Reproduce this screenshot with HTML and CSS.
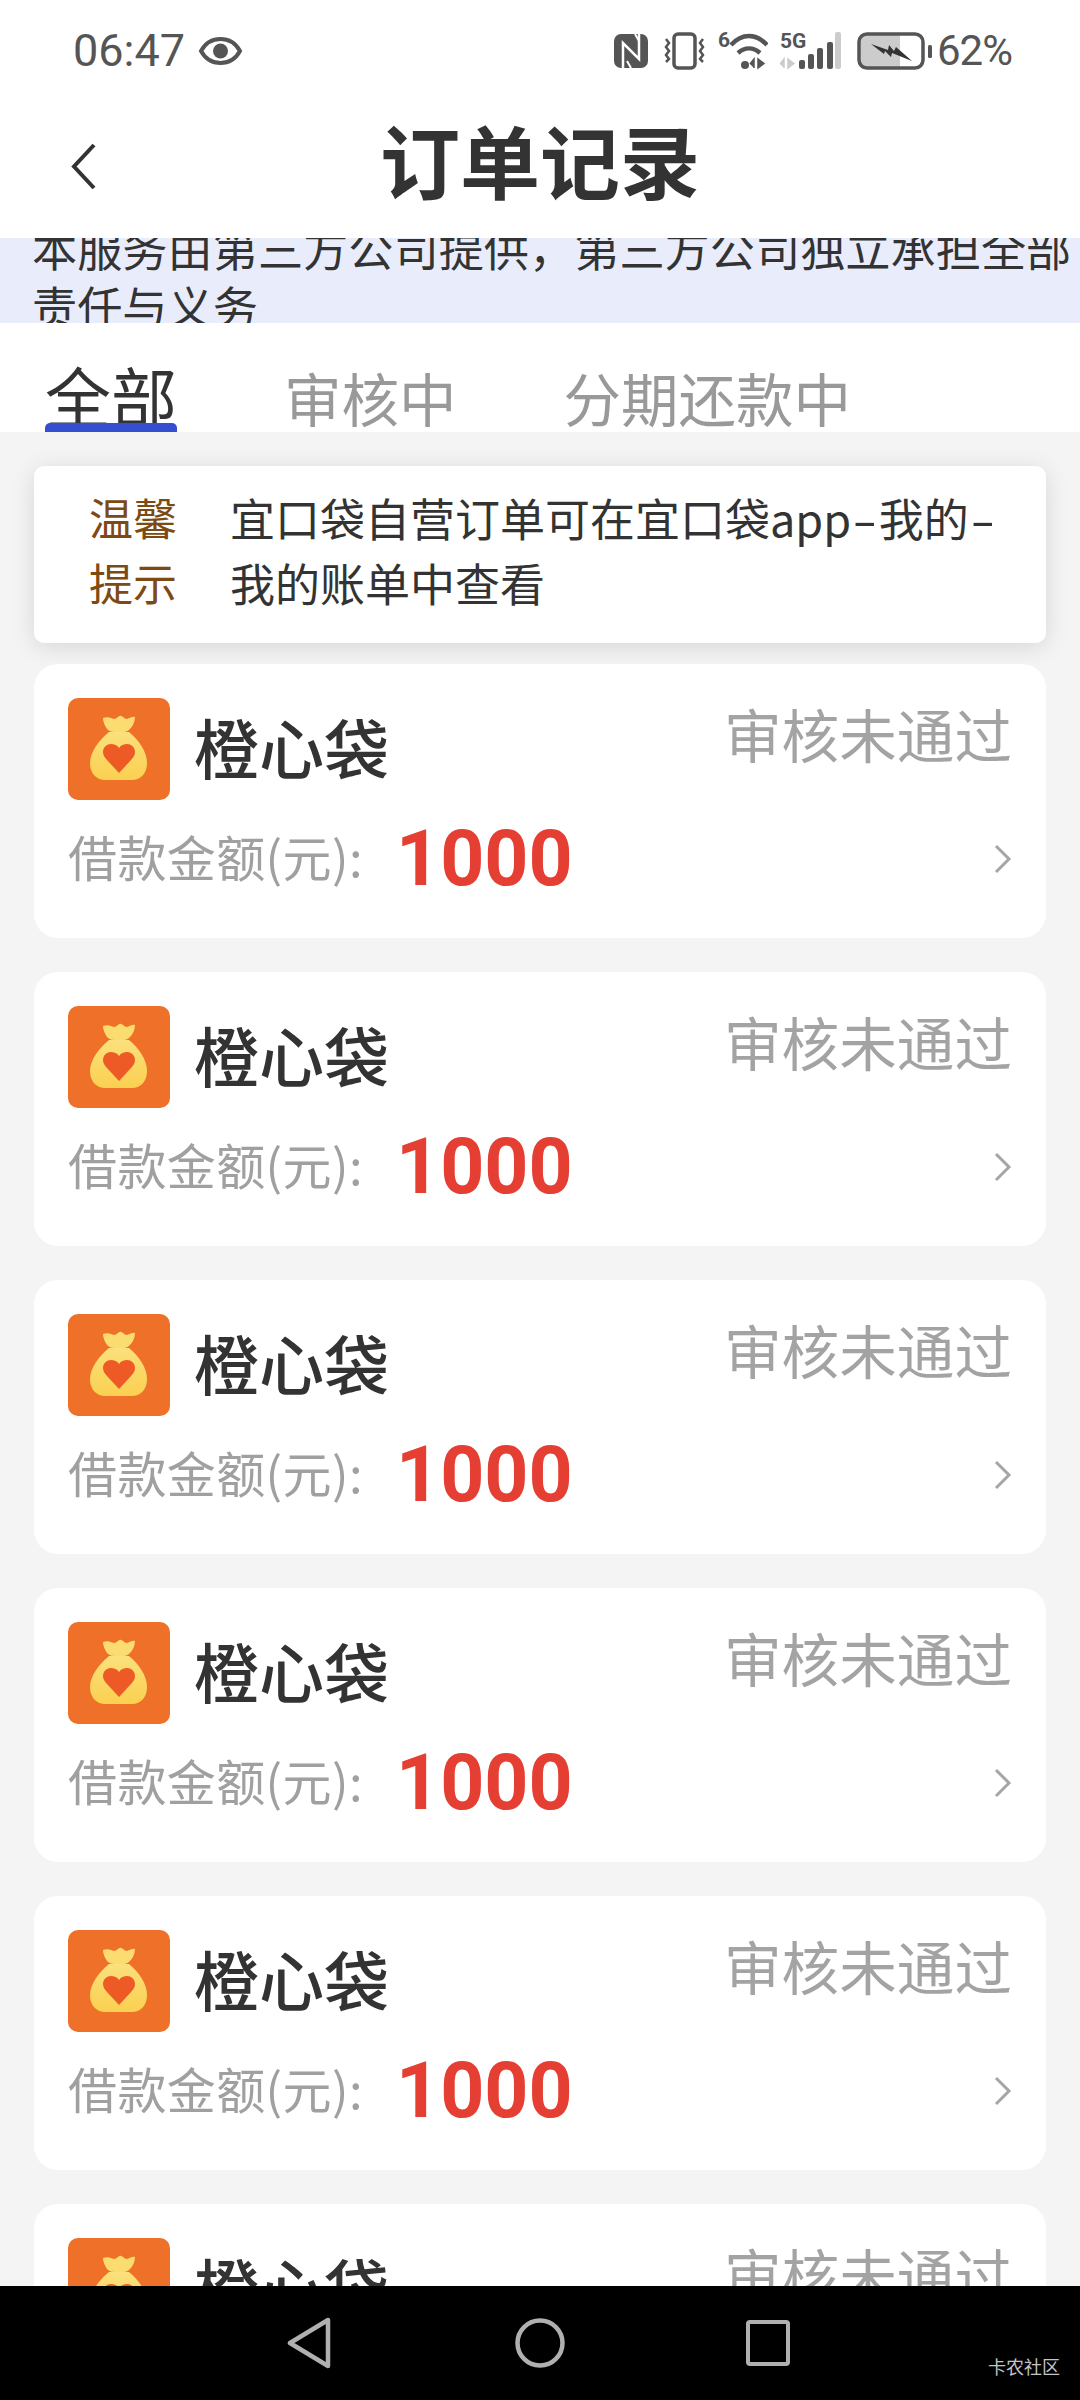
FILE: index.html
```html
<!DOCTYPE html>
<html lang="zh-CN">
<head>
    <meta charset="UTF-8">
    <meta name="viewport" content="width=device-width, initial-scale=1.0">
    <title>订单记录</title>
    <link rel="stylesheet" href="styles.css">
</head>
<body>
    <svg class="defs" width="0" height="0">
        <defs>
            <linearGradient id="bagFill" x1="0" y1="0" x2="0" y2="1">
                <stop offset="0" stop-color="#fbe07c"/>
                <stop offset="1" stop-color="#fad050"/>
            </linearGradient>
        </defs>
        <symbol id="bag" viewBox="0 0 102 102">
            <rect width="102" height="102" rx="10" fill="#ef7029"/>
            <path d="M35 20c5-2 8 0 11 1 3 0 5-4 7-3 2 0 3 3 6 3 3-1 6-3 8-2 0 4-2 9-5 12-2 2-4 3-6 3H46c-3 0-5-1-7-3-2-3-4-7-4-11z" fill="#fbdc70"/>
            <path d="M41 34h20c10 8 18 20 18 31 0 11-7 17-15 17H37c-8 0-15-6-15-17 0-11 9-23 19-31z" fill="url(#bagFill)"/>
            <path d="M51 75 39 62c-3-3-4-6-4-8 0-5 4-8 8-8 3 0 6 1 8 4 2-3 5-4 8-4 4 0 8 3 8 8 0 2-1 5-4 8z" fill="#ee5a26"/>
        </symbol>
        <symbol id="more" viewBox="0 0 18 30">
            <path d="M2 2l13 13L2 28" fill="none" stroke="#a6a6a6" stroke-width="3"/>
        </symbol>
    </svg>

    <div class="status-bar">
        <div class="status-left">
            <span class="clock">06:47</span>
            <svg class="eye" width="45" height="30" viewBox="0 0 45 30">
                <path d="M3 15C8 6 15 3 22.500 3S37 6 42 15c-5 9-12 12-19.500 12S8 24 3 15z" fill="none" stroke="#555" stroke-width="4"/>
                <circle cx="22.500" cy="15" r="7.500" fill="#555"/>
            </svg>
        </div>
        <div class="status-right">
            <svg width="34" height="34" viewBox="0 0 34 34">
                <rect width="34" height="34" rx="7" fill="#555"/>
                <path d="M9 34V9l16 16V0" fill="none" stroke="#fff" stroke-width="2.500"/>
                <path d="M13 27l4 7M21 0l4 7" fill="none" stroke="#fff" stroke-width="2"/>
            </svg>
            <svg class="gap-vibrate" width="43" height="38" viewBox="0 0 43 38">
                <rect x="11" y="2" width="21" height="34" rx="4" fill="none" stroke="#555" stroke-width="3.500"/>
                <path d="M3 7l3 4-3 4 3 4-3 4 3 4-3 3M40 7l-3 4 3 4-3 4 3 4-3 4 3 3" fill="none" stroke="#555" stroke-width="2.500"/>
            </svg>
            <svg class="gap-wifi" width="50" height="50" viewBox="0 -6 50 50">
                <text x="0" y="15" class="mini">6</text>
                <path d="M13 13C24 1 38 1 49 13" fill="none" stroke="#555" stroke-width="4.500"/>
                <path d="M20 21c7-6 15-6 22 0" fill="none" stroke="#555" stroke-width="4.500"/>
                <circle cx="27" cy="33" r="4" fill="#555"/>
                <path d="M36 36V27l-4 5M40 27v9l6-4.500z" fill="#555" stroke="#555" stroke-width="1.500"/>
            </svg>
            <svg class="gap-signal" width="61" height="50" viewBox="0 -6 61 50">
                <text x="0" y="16" class="mini">5G</text>
                <path d="M4 36v-9l-4 5M8 27v9l6-4.500z" fill="#ccc" stroke="#ccc" stroke-width="1.500"/>
                <rect x="19" y="28" width="6" height="9" rx="2" fill="#555"/>
                <rect x="28" y="22" width="6" height="15" rx="2" fill="#555"/>
                <rect x="37" y="16" width="6" height="21" rx="2" fill="#555"/>
                <rect x="47" y="10" width="6" height="27" rx="2" fill="#555"/>
                <rect x="55" y="0" width="6" height="37" rx="2" fill="#ccc"/>
            </svg>
            <svg class="gap-battery" width="75" height="38" viewBox="0 0 75 38">
                <path d="M7 2h36v34H7a5 5 0 0 1-5-5V7a5 5 0 0 1 5-5z" fill="#ccc"/>
                <rect x="2" y="2" width="64" height="34" rx="8" fill="none" stroke="#555" stroke-width="3.500"/>
                <path d="M14 12l17 6 1-5 5 6 2-4 16 14-20-8-1 4-6-6-1 3z" fill="#333"/>
                <rect x="71" y="13" width="4" height="13" rx="1.500" fill="#555"/>
            </svg>
            <span class="battery">62%</span>
        </div>
    </div>

    <div class="nav">
        <svg class="nav-back" width="26" height="47" viewBox="0 0 26 47">
            <path d="M24 2L4 23.500 24 45" fill="none" stroke="#333" stroke-width="4"/>
        </svg>
        <h1>订单记录</h1>
    </div>

    <div class="notice">
        <p>本服务由第三方公司提供，第三方公司独立承担全部责任与义务</p>
    </div>

    <div class="tabs">
        <div class="tab active">全部</div>
        <div class="tab">审核中</div>
        <div class="tab">分期还款中</div>
    </div>

    <div class="content">
        <div class="tip">
            <div class="tip-label">温馨提示</div>
            <div class="tip-text">宜口袋自营订单可在宜口袋app<span class="dash">-</span>我的<span class="dash">-</span>我的账单中查看</div>
        </div>

        <div class="card">
            <div class="card-top">
                <svg class="logo"><use href="#bag"/></svg>
                <div class="name">橙心袋</div>
                <div class="state">审核未通过</div>
            </div>
            <div class="card-bottom">
                <span class="label">借款金额(元):</span>
                <span class="amount">1000</span>
                <svg class="more"><use href="#more"/></svg>
            </div>
        </div>
        <div class="card">
            <div class="card-top">
                <svg class="logo"><use href="#bag"/></svg>
                <div class="name">橙心袋</div>
                <div class="state">审核未通过</div>
            </div>
            <div class="card-bottom">
                <span class="label">借款金额(元):</span>
                <span class="amount">1000</span>
                <svg class="more"><use href="#more"/></svg>
            </div>
        </div>
        <div class="card">
            <div class="card-top">
                <svg class="logo"><use href="#bag"/></svg>
                <div class="name">橙心袋</div>
                <div class="state">审核未通过</div>
            </div>
            <div class="card-bottom">
                <span class="label">借款金额(元):</span>
                <span class="amount">1000</span>
                <svg class="more"><use href="#more"/></svg>
            </div>
        </div>
        <div class="card">
            <div class="card-top">
                <svg class="logo"><use href="#bag"/></svg>
                <div class="name">橙心袋</div>
                <div class="state">审核未通过</div>
            </div>
            <div class="card-bottom">
                <span class="label">借款金额(元):</span>
                <span class="amount">1000</span>
                <svg class="more"><use href="#more"/></svg>
            </div>
        </div>
        <div class="card">
            <div class="card-top">
                <svg class="logo"><use href="#bag"/></svg>
                <div class="name">橙心袋</div>
                <div class="state">审核未通过</div>
            </div>
            <div class="card-bottom">
                <span class="label">借款金额(元):</span>
                <span class="amount">1000</span>
                <svg class="more"><use href="#more"/></svg>
            </div>
        </div>
        <div class="card">
            <div class="card-top">
                <svg class="logo"><use href="#bag"/></svg>
                <div class="name">橙心袋</div>
                <div class="state">审核未通过</div>
            </div>
        </div>
    </div>

    <div class="system-bar">
        <svg width="46" height="52" viewBox="0 0 46 52">
            <path d="M42 3v46L4 26z" fill="none" stroke="#b0b0b0" stroke-width="4.500" stroke-linejoin="round"/>
        </svg>
        <svg width="50" height="50" viewBox="0 0 50 50">
            <circle cx="25" cy="25" r="22.500" fill="none" stroke="#b0b0b0" stroke-width="4.500"/>
        </svg>
        <svg class="recent" width="44" height="46" viewBox="0 0 44 46">
            <rect x="2" y="2" width="40" height="42" rx="2" fill="none" stroke="#b0b0b0" stroke-width="4"/>
        </svg>
        <span class="watermark">卡农社区</span>
    </div>
</body>
</html>
```

FILE: styles.css
```css
html, body {
    margin: 0;
    padding: 0;
}

body {
    position: relative;
    width: 1080px;
    height: 2400px;
    overflow: hidden;
    display: flex;
    flex-direction: column;
    background-color: #f4f4f4;
    font-family: Roboto, 'Noto Sans CJK SC', sans-serif;
    color: #333;
}

.defs {
    position: absolute;
}

.status-bar {
    height: 102px;
    flex-shrink: 0;
    box-sizing: border-box;
    padding: 30px 68px 0 73px;
    display: flex;
    justify-content: space-between;
    align-items: flex-start;
    background-color: #fff;
    color: #555;
}

.status-left, .status-right {
    display: flex;
    align-items: center;
    height: 42px;
}

.clock {
    font-size: 45px;
    line-height: 42px;
}

.battery {
    margin-left: 5px;
    font-size: 42px;
    line-height: 42px;
    letter-spacing: -1px;
}

.eye {
    margin-left: 13px;
}

.gap-vibrate {
    margin-left: 15px;
}

.gap-wifi {
    margin-left: 12px;
}

.gap-signal {
    margin-left: 12px;
}

.gap-battery {
    margin-left: 16px;
}

.mini {
    font-family: Roboto, sans-serif;
    font-size: 21px;
    font-weight: 700;
    fill: #555;
}

.nav {
    position: relative;
    height: 136px;
    flex-shrink: 0;
    display: flex;
    justify-content: center;
    align-items: center;
    background-color: #fff;
}

.nav-back {
    position: absolute;
    left: 70px;
    top: 41px;
}

h1 {
    margin: 0 0 8px;
    font-size: 80px;
    line-height: 100px;
    font-weight: 700;
    color: #333;
}

.notice {
    height: 85px;
    flex-shrink: 0;
    box-sizing: border-box;
    padding: 0 5px 0 32px;
    display: flex;
    flex-direction: column;
    justify-content: center;
    overflow: hidden;
    background-color: #e9edfb;
}

.notice p {
    margin: 0;
    font-size: 45.200px;
    line-height: 58px;
}

.tabs {
    height: 109px;
    flex-shrink: 0;
    box-sizing: border-box;
    padding-left: 45px;
    display: flex;
    gap: 107px;
    background-color: #fff;
}

.tab {
    padding-top: 51px;
    font-size: 57.500px;
    line-height: 58px;
    color: #999;
}

.tab.active {
    position: relative;
    padding-top: 48px;
    font-size: 66px;
    line-height: 60px;
    color: #333;
}

.tab.active::after {
    content: '';
    position: absolute;
    left: 0;
    right: 0;
    bottom: 0;
    height: 9px;
    border-radius: 5px 5px 0 0;
    background-color: #3450d0;
}

.content {
    flex: 1;
    padding: 34px 34px 0;
    overflow: hidden;
}

.tip {
    height: 177px;
    box-sizing: border-box;
    margin-bottom: 21px;
    padding: 23px 30px 0 55px;
    display: flex;
    gap: 53px;
    border-radius: 10px;
    background-color: #fff;
    box-shadow: 0 4px 24px rgba(0, 0, 0, 0.12);
}

.tip-label {
    width: 88px;
    flex-shrink: 0;
    font-size: 44px;
    line-height: 65px;
    color: #7d4a14;
}

.tip-text {
    margin-top: -4px;
    font-family: 'Noto Sans CJK SC', sans-serif;
    font-size: 45px;
    line-height: 65px;
}

.dash {
    display: inline-block;
    margin: 0 6px;
    transform: scaleX(1.6);
}

.card {
    height: 274px;
    box-sizing: border-box;
    margin-bottom: 34px;
    padding: 34px 34px 0;
    border-radius: 24px;
    background-color: #fff;
}

.card-top {
    display: flex;
    align-items: flex-start;
}

.logo {
    width: 102px;
    height: 102px;
    flex-shrink: 0;
}

.name {
    margin: 10px 0 0 24px;
    font-size: 65px;
    line-height: 88px;
    font-weight: 500;
    color: #333;
}

.state {
    margin: 4px 0 0 auto;
    font-size: 57.600px;
    line-height: 74px;
    color: #a3a3a3;
}

.card-bottom {
    margin-top: 19px;
    height: 76px;
    display: flex;
    align-items: center;
}

.label {
    width: 328px;
    margin-bottom: 3px;
    font-family: 'Noto Sans CJK SC', sans-serif;
    font-size: 49px;
    letter-spacing: 0.400px;
    color: #a0a0a0;
    white-space: nowrap;
}

.amount {
    margin-top: 4px;
    font-size: 77px;
    font-weight: 700;
    color: #e53e33;
}

.more {
    width: 18px;
    height: 30px;
    margin: 4px 0 0 auto;
}

.system-bar {
    position: absolute;
    left: 0;
    right: 0;
    bottom: 0;
    height: 114px;
    box-sizing: border-box;
    padding-right: 4px;
    display: flex;
    justify-content: center;
    align-items: center;
    gap: 183px;
    background-color: #000;
}

.recent {
    margin-left: -2px;
}

.watermark {
    position: absolute;
    right: 20px;
    bottom: 20px;
    font-size: 18px;
    line-height: 24px;
    color: #c4c4c4;
}
```
